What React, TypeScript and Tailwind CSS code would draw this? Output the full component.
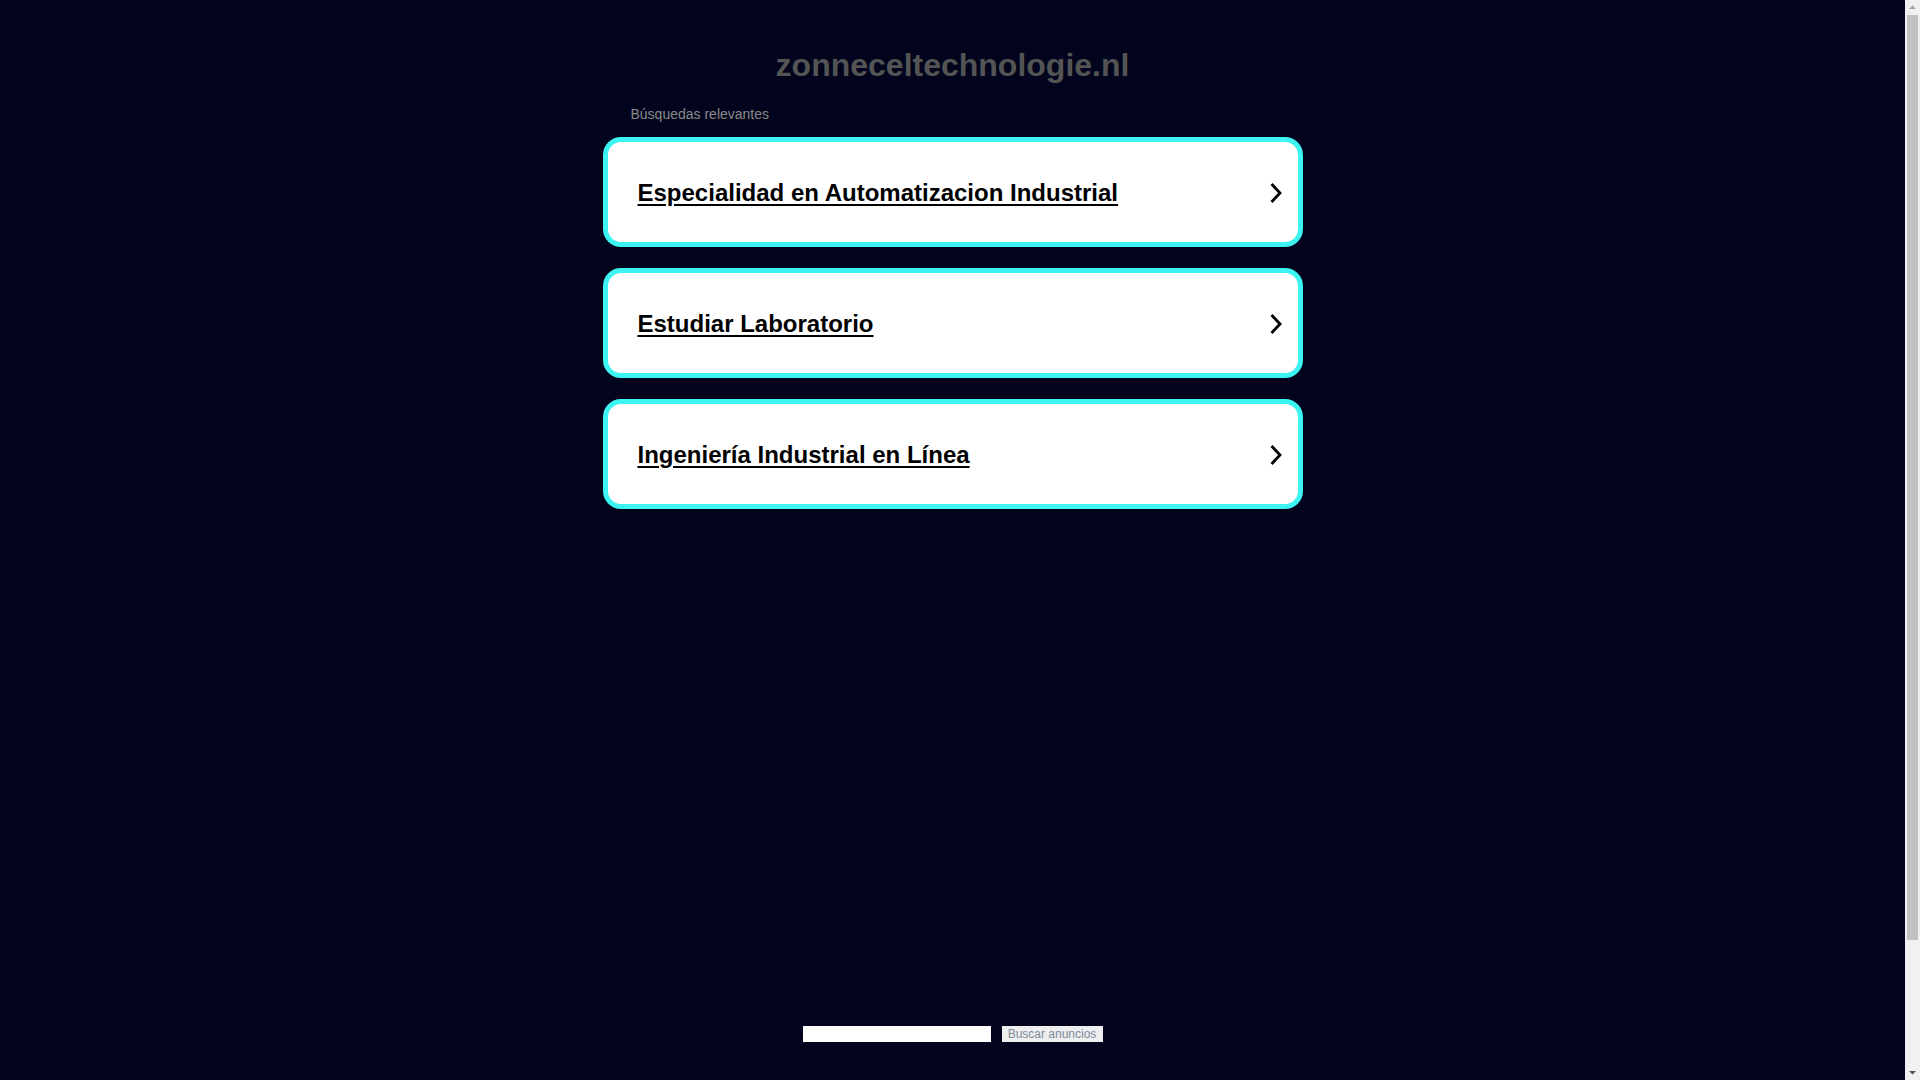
const searches = [
  "Especialidad en Automatizacion Industrial",
  "Estudiar Laboratorio",
  "Ingeniería Industrial en Línea",
];

function Chevron() {
  return (
    <svg width="14" height="22" viewBox="0 0 14 22" fill="none" className="shrink-0">
      <path d="M3.5 3l7.5 8-7.5 8" stroke="#000" strokeWidth="2.8" strokeLinecap="square" strokeLinejoin="miter" />
    </svg>
  );
}

function FakeScrollbar() {
  return (
    <div className="flex w-[15px] shrink-0 flex-col items-center bg-[#f1f1f1]">
      <svg width="15" height="15" viewBox="0 0 15 15" className="shrink-0">
        <path d="M4 9h7L7.5 5.5z" fill="#a3a3a3" />
      </svg>
      <div className="h-[925px] w-[11px] bg-[#c1c1c1]" />
      <div className="flex-1" />
      <svg width="15" height="15" viewBox="0 0 15 15" className="shrink-0">
        <path d="M4 6h7L7.5 9.5z" fill="#505050" />
      </svg>
    </div>
  );
}

export default function App() {
  return (
    <div
      className="flex h-[1080px] overflow-hidden bg-[#01041c]"
      style={{ fontFamily: '"Liberation Sans", Arial, sans-serif' }}
    >
      <main className="flex-1">
        <div className="mx-auto w-[700px]">
          <h1 className="pt-[45px] text-center text-[32px] font-bold leading-[40px] text-[#545454]">
            zonneceltechnologie.nl
          </h1>
          <div className="mt-[21px] pl-[28px] text-[14px] leading-[16px] text-[#8a8a8a]">
            Búsquedas relevantes
          </div>
          <div className="mt-[15px] flex flex-col gap-[21px]">
            {searches.map((s) => (
              <a
                key={s}
                href="#"
                className="flex h-[110px] items-center justify-between rounded-[18px] border-[5px] border-[#3cf4f1] bg-white pl-[30px] pr-[15px] pt-[2px]"
              >
                <span className="text-[24px] font-bold text-black underline underline-offset-[3px]">{s}</span>
                <Chevron />
              </a>
            ))}
          </div>
        </div>
        <div className="mt-[517px] flex items-center justify-center gap-[11px]">
          <input type="text" className="h-[16px] w-[188px] border-0 bg-white p-0 outline-none" />
          <button className="h-[16px] w-[101px] bg-[#efefef] p-0 text-[12px] leading-[16px] text-[#7b8b9c]">
            Buscar anuncios
          </button>
        </div>
      </main>
      <FakeScrollbar />
    </div>
  );
}
